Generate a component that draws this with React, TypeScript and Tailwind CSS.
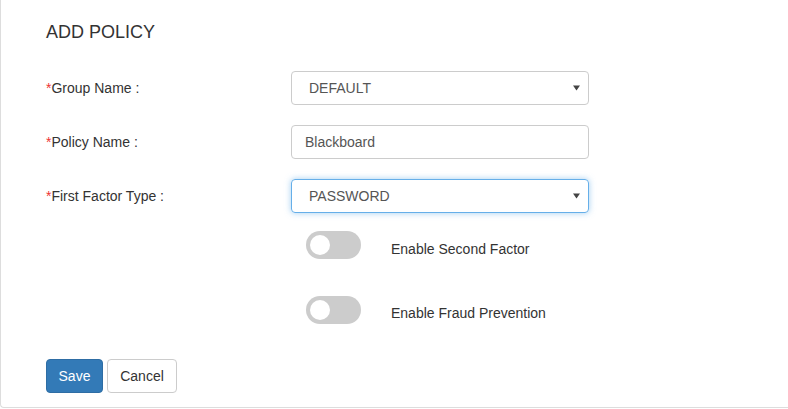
import React from "react";

const Label = ({ text }: { text: string }) => (
  <div className="w-[245px] shrink-0 text-[14px] text-[#333]">
    <span className="text-[#e33]">*</span>
    {text} :
  </div>
);

const Caret = () => (
  <svg
    className="pointer-events-none absolute right-[8px] top-1/2 -translate-y-1/2"
    width="7"
    height="6"
    viewBox="0 0 7 6"
  >
    <path d="M0 0.5 H7 L3.5 5.5 Z" fill="#444" />
  </svg>
);

const SelectBox = ({ value, focused }: { value: string; focused?: boolean }) => (
  <div
    className={
      focused
        ? "relative flex h-[34px] w-[298px] items-center rounded-[4px] border border-[#66afe9] pl-[17px] text-[14px] text-[#555] shadow-[0_0_6px_rgba(102,175,233,0.6)]"
        : "relative flex h-[34px] w-[298px] items-center rounded-[4px] border border-[#ccc] pl-[17px] text-[14px] text-[#555]"
    }
  >
    {value}
    <Caret />
  </div>
);

const Toggle = () => (
  <div className="flex h-[28px] w-[55px] shrink-0 items-center rounded-full bg-[#ccc] pl-[4px]">
    <div className="h-[20px] w-[20px] rounded-full bg-white" />
  </div>
);

export default function App() {
  return (
    <div
      className="min-h-[409px] bg-white"
      style={{ fontFamily: '"Liberation Sans", Arial, sans-serif' }}
    >
      <div className="rounded-bl-[4px] border-b border-l border-[#ddd] pb-[14px] pl-[45px] pt-[22px]">
        <h2 className="h-[20px] text-[18px] leading-[20px] text-[#333]">ADD POLICY</h2>

        <div className="mt-[29px] flex flex-col gap-[20px]">
          <div className="flex items-center">
            <Label text="Group Name" />
            <SelectBox value="DEFAULT" />
          </div>
          <div className="flex items-center">
            <Label text="Policy Name" />
            <div className="flex h-[34px] w-[298px] items-center rounded-[4px] border border-[#ccc] pl-[13px] text-[14px] text-[#555]">
              Blackboard
            </div>
          </div>
          <div className="flex items-center">
            <Label text="First Factor Type" />
            <SelectBox value="PASSWORD" focused />
          </div>
        </div>

        <div className="ml-[260px] mt-[18px] flex items-start gap-[30px]">
          <Toggle />
          <span className="pt-[8px] text-[14px] leading-[20px] text-[#333]">Enable Second Factor</span>
        </div>
        <div className="ml-[260px] mt-[37px] flex items-start gap-[30px]">
          <Toggle />
          <span className="pt-[7px] text-[14px] leading-[20px] text-[#333]">Enable Fraud Prevention</span>
        </div>

        <div className="mt-[35px] flex gap-[4px]">
          <button className="h-[34px] w-[57px] rounded-[4px] border border-[#2e6da4] bg-[#337ab7] text-[14px] text-white">
            Save
          </button>
          <button className="h-[34px] w-[70px] rounded-[4px] border border-[#ccc] bg-white text-[14px] text-[#333]">
            Cancel
          </button>
        </div>
      </div>
    </div>
  );
}
